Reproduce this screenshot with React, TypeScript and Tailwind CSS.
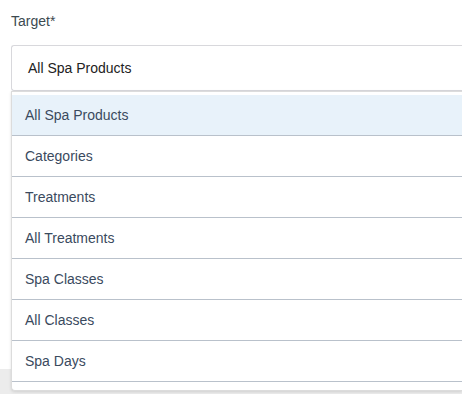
import React from "react";

const items = [
  "All Spa Products",
  "Categories",
  "Treatments",
  "All Treatments",
  "Spa Classes",
  "All Classes",
  "Spa Days",
];

export default function App() {
  return (
    <div
      className="relative w-[462px] h-[394px] overflow-hidden bg-white flex flex-col"
      style={{ fontFamily: '"Liberation Sans", Arial, sans-serif' }}
    >
      <div className="pl-[11px] pt-[11px] text-[14px] leading-[20px] text-[#3c4a50]">Target*</div>
      <div className="ml-[11px] mt-[14px] h-[46px] border border-r-0 border-[#d8d8dc] rounded-l-[3px] flex items-center pl-[16px] text-[14px] text-[#222] bg-white">
        All Spa Products
      </div>
      <div className="flex-1" />
      <div className="h-[25px] bg-[#ececec]" />

      <div className="absolute left-[11px] right-0 top-[91px] h-[300px] bg-white border border-r-0 border-[#dcdcdc] rounded-bl-[4px] shadow-[0_1px_3px_rgba(0,0,0,0.12)] pt-[3px]">
        {items.map((it, i) => (
          <div
            key={it}
            className={`h-[41px] border-b border-[#b9c1cb] flex items-center pl-[13px] text-[14px] text-[#3a4a5e] ${
              i === 0 ? "bg-[#e8f2fa]" : ""
            }`}
          >
            {it}
          </div>
        ))}
      </div>
    </div>
  );
}
